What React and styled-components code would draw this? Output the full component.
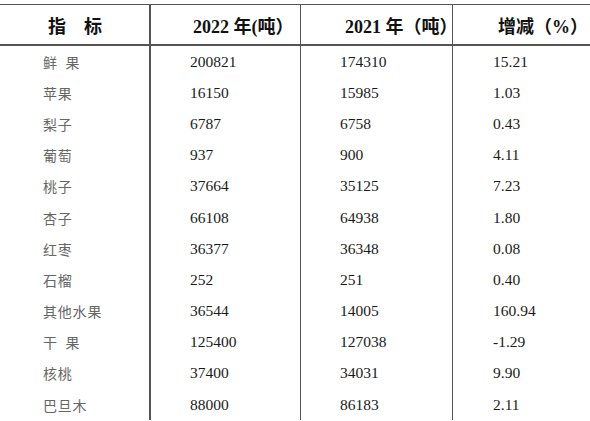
import React from "react";
import styled, { createGlobalStyle } from "styled-components";

const Global = createGlobalStyle`
  html, body { margin: 0; padding: 0; background: #fff; }
  body { width: 590px; height: 421px; overflow: hidden; }
`;

const Page = styled.div`
  padding-top: 4px;
  width: 590px;
`;

const Table = styled.div`
  display: grid;
  grid-template-columns: 151px 150px 152px 137px;
  grid-auto-rows: 31.2px;
  grid-template-rows: 41px;
  border-top: 1.5px solid #555;
`;

const Cell = styled.div`
  display: flex;
  align-items: center;
  justify-content: ${(p) => p.$justify || "flex-start"};
  padding-left: ${(p) => p.$pl || 0}px;
  padding-right: ${(p) => p.$pr || 0}px;
  border-right: ${(p) => (p.$line ? `${p.$line}px solid #555` : "none")};
  box-sizing: border-box;
  white-space: pre;
`;

const HeadCell = styled(Cell)`
  border-bottom: 2px solid #555;
  font-family: "Liberation Serif", "Noto Sans CJK SC", serif;
  font-weight: 700;
  font-size: 18px;
  color: #111;
  padding-top: 1px;
`;

const NameCell = styled(Cell)`
  font-family: "Noto Sans CJK SC", sans-serif;
  font-size: 14px;
  letter-spacing: 0.8px;
  color: #666;
`;

const NumCell = styled(Cell)`
  font-family: "Liberation Serif", serif;
  font-size: 15.5px;
  color: #1a1a1a;
`;

const rows = [
  ["鲜\u2002果", "200821", "174310", "15.21"],
  ["苹果", "16150", "15985", "1.03"],
  ["梨子", "6787", "6758", "0.43"],
  ["葡萄", "937", "900", "4.11"],
  ["桃子", "37664", "35125", "7.23"],
  ["杏子", "66108", "64938", "1.80"],
  ["红枣", "36377", "36348", "0.08"],
  ["石榴", "252", "251", "0.40"],
  ["其他水果", "36544", "14005", "160.94"],
  ["干\u2002果", "125400", "127038", "-1.29"],
  ["核桃", "37400", "34031", "9.90"],
  ["巴旦木", "88000", "86183", "2.11"],
];

export default function App() {
  return (
    <Page>
      <Global />
      <Table>
        <HeadCell $pl={48} $line={2}>指　标</HeadCell>
        <HeadCell $pl={42} $line={1}>2022 年(吨）</HeadCell>
        <HeadCell $pl={44} $line={1}>2021 年（吨）</HeadCell>
        <HeadCell $pl={45}>增减（%）</HeadCell>
        {rows.map((r) => (
          <React.Fragment key={r[0]}>
            <NameCell $pl={43} $line={2}>{r[0]}</NameCell>
            <NumCell $pl={39} $line={1}>{r[1]}</NumCell>
            <NumCell $pl={39} $line={1}>{r[2]}</NumCell>
            <NumCell $pl={40}>{r[3]}</NumCell>
          </React.Fragment>
        ))}
      </Table>
    </Page>
  );
}
